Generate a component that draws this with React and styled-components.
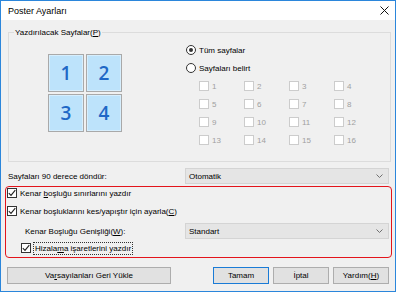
import React from "react";
import styled, { createGlobalStyle } from "styled-components";

const GlobalStyle = createGlobalStyle`
  html, body { margin: 0; padding: 0; background: #fff; }
  body { font-family: "Liberation Sans", Arial, sans-serif; font-size: 8px; color: #000; }
  * { box-sizing: border-box; }
`;

const Window = styled.div`
  width: 396px;
  height: 292px;
  border: 1px solid #2b86db;
  background: #f0f0f0;
  display: flex;
  flex-direction: column;
`;

const TitleBar = styled.div`
  height: 19px;
  background: #fff;
  display: flex;
  align-items: center;
  justify-content: space-between;
  padding: 0 6px 0 7px;
`;

const Title = styled.span`
  font-size: 9px;
  line-height: 11px;
  padding-top: 1px;
`;

const Body = styled.div`
  flex: 1;
  display: flex;
  flex-direction: column;
`;

const GroupBox = styled.div`
  position: relative;
  margin: 12px 0 0 7px;
  width: 383px;
  height: 130px;
  border: 1px solid #dcdcdc;
  display: flex;
  align-items: flex-start;
`;

const Legend = styled.span`
  position: absolute;
  top: -6px;
  left: 5px;
  padding: 0 1px;
  background: #f0f0f0;
  line-height: 11px;
`;

const U = styled.span`
  text-decoration: underline;
`;

const PageGrid = styled.div`
  display: grid;
  grid-template-columns: 36px 36px;
  grid-auto-rows: 38px;
  gap: 2px;
  margin: 21px 0 0 39px;
`;

const Tile = styled.div`
  background: #bde3fb;
  border: 1px solid #a9a9a9;
  box-shadow: inset 0 0 0 1px #d6eefd;
  display: flex;
  align-items: center;
  justify-content: center;
  color: #1f68c6;
  font-family: "Open Sans", "Noto Sans", sans-serif;
  font-weight: 600;
  font-size: 19px;
  line-height: 1;
`;

const Options = styled.div`
  margin: 8px 0 0 64px;
  display: flex;
  flex-direction: column;
`;

const RadioRow = styled.label`
  height: 18px;
  display: flex;
  align-items: center;
  gap: 3px;
`;

const Radio = styled.span`
  width: 10px;
  height: 10px;
  border-radius: 50%;
  border: 1px solid #333;
  background: #fff;
  display: flex;
  align-items: center;
  justify-content: center;
  &::after {
    content: "";
    width: 4px;
    height: 4px;
    border-radius: 50%;
    background: ${(p) => (p.$checked ? "#333" : "transparent")};
  }
`;

const PageChecks = styled.div`
  display: grid;
  grid-template-columns: repeat(4, 45px);
  grid-auto-rows: 18px;
  margin-left: 13px;
`;

const PageCheck = styled.div`
  display: flex;
  align-items: center;
  gap: 3px;
  color: #a0a0a0;
`;

const DisabledBox = styled.span`
  width: 10px;
  height: 10px;
  border: 1px solid #cccccc;
  background: #fff;
`;

const FieldRow = styled.div`
  display: flex;
  align-items: center;
  height: 16px;
  margin: ${(p) => p.$margin || "0"};
`;

const FieldLabel = styled.span`
  width: ${(p) => p.$width}px;
  flex-shrink: 0;
`;

const Select = styled.div`
  width: 204px;
  height: 16px;
  border: 1px solid #d4d4d4;
  background: #e5e5e5;
  display: flex;
  align-items: center;
  justify-content: space-between;
  padding: 0 5px 0 3px;
  margin-left: ${(p) => p.$ml || 0}px;
`;

const RedBox = styled.div`
  margin: 2px 0 0 4px;
  width: 387px;
  border: 1px solid #e3141b;
  border-radius: 4px;
  padding: 0 0 3px 0;
  display: flex;
  flex-direction: column;
`;

const CheckRow = styled.div`
  height: 12px;
  display: flex;
  align-items: center;
  gap: 3px;
  margin: ${(p) => p.$margin || "0"};
`;

const Box = styled.span`
  width: 10px;
  height: 10px;
  border: 1px solid #333;
  background: #fff;
  display: flex;
  align-items: center;
  justify-content: center;
`;

const FocusText = styled.span`
  outline: 1px dotted #333;
  outline-offset: 0px;
  padding: 0 1px;
  line-height: 11px;
`;

const ButtonRow = styled.div`
  display: flex;
  height: 17px;
  margin: 9px 0 0 6px;
  gap: 4px;
`;

const Button = styled.div`
  width: ${(p) => p.$width}px;
  height: 17px;
  background: #e1e1e1;
  border: 1px solid ${(p) => (p.$default ? "#1a7bd6" : "#adadad")};
  display: flex;
  align-items: center;
  justify-content: center;
  margin-left: ${(p) => p.$ml || 0}px;
`;

const Chevron = () => (
  <svg width="7" height="4" viewBox="0 0 7 4">
    <path d="M0.5 0.5 L3.5 3.5 L6.5 0.5" fill="none" stroke="#707070" strokeWidth="1" />
  </svg>
);

const Check = () => (
  <svg width="8" height="8" viewBox="0 0 8 8">
    <path d="M0.8 4.2 L3 6.4 L7.3 1.2" fill="none" stroke="#222" strokeWidth="1.1" />
  </svg>
);

const CloseIcon = () => (
  <svg width="9" height="9" viewBox="0 0 9 9">
    <path d="M0.5 0.5 L8.5 8.5 M8.5 0.5 L0.5 8.5" stroke="#111" strokeWidth="1" />
  </svg>
);

const pages = Array.from({ length: 16 }, (_, i) => i + 1);

export default function App() {
  return (
    <>
      <GlobalStyle />
      <Window>
        <TitleBar>
          <Title>Poster Ayarları</Title>
          <CloseIcon />
        </TitleBar>
        <Body>
          <GroupBox>
            <Legend>
              Yazdırılacak Sayfalar(<U>P</U>)
            </Legend>
            <PageGrid>
              <Tile>1</Tile>
              <Tile>2</Tile>
              <Tile>3</Tile>
              <Tile>4</Tile>
            </PageGrid>
            <Options>
              <RadioRow>
                <Radio $checked />
                Tüm sayfalar
              </RadioRow>
              <RadioRow>
                <Radio />
                Sayfaları belirt
              </RadioRow>
              <PageChecks>
                {pages.map((n) => (
                  <PageCheck key={n}>
                    <DisabledBox />
                    {n}
                  </PageCheck>
                ))}
              </PageChecks>
            </Options>
          </GroupBox>

          <FieldRow $margin="6px 0 0 7px">
            <FieldLabel $width={177}>Sayfaları 90 derece döndür:</FieldLabel>
            <Select>
              <span>Otomatik</span>
              <Chevron />
            </Select>
          </FieldRow>

          <RedBox>
            <CheckRow $margin="0 0 0 1px">
              <Box>
                <Check />
              </Box>
              <span>
                Kenar <U>b</U>oşluğu sınırlarını yazdır
              </span>
            </CheckRow>
            <CheckRow $margin="6px 0 0 1px">
              <Box>
                <Check />
              </Box>
              <span>
                Kenar boşluklarını kes/yapıştır için ayarla(<U>C</U>)
              </span>
            </CheckRow>
            <FieldRow $margin="6px 0 0 19px">
              <FieldLabel $width={160}>
                Kenar Boşluğu Genişliği(<U>W</U>):
              </FieldLabel>
              <Select>
                <span>Standart</span>
                <Chevron />
              </Select>
            </FieldRow>
            <CheckRow $margin="3px 0 0 15px">
              <Box>
                <Check />
              </Box>
              <FocusText>
                Hizala<U>m</U>a işaretlerini yazdır
              </FocusText>
            </CheckRow>
          </RedBox>

          <ButtonRow>
            <Button $width={164}>
              <span>
                Va<U>r</U>sayılanları Geri Yükle
              </span>
            </Button>
            <Button $width={56} $default $ml={38}>
              Tamam
            </Button>
            <Button $width={56}>İptal</Button>
            <Button $width={56}>
              <span>
                Yardım(<U>H</U>)
              </span>
            </Button>
          </ButtonRow>
        </Body>
      </Window>
    </>
  );
}
